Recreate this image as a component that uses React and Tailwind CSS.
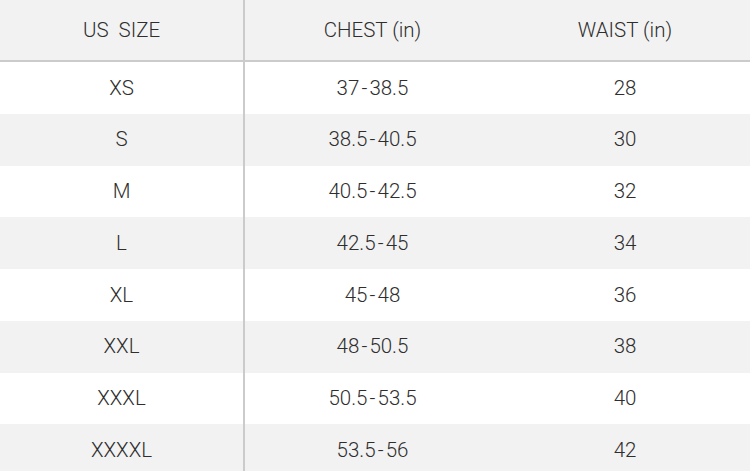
import React from "react";

const rows = [
  ["XS", "37-38.5", "28"],
  ["S", "38.5-40.5", "30"],
  ["M", "40.5-42.5", "32"],
  ["L", "42.5-45", "34"],
  ["XL", "45-48", "36"],
  ["XXL", "48-50.5", "38"],
  ["XXXL", "50.5-53.5", "40"],
  ["XXXXL", "53.5-56", "42"],
];

export default function App() {
  return (
    <div className="w-[750px] h-[471px] overflow-hidden bg-white text-[#2e2e2e] font-['Roboto',sans-serif] font-light text-[20.5px]">
      <div className="grid grid-cols-[245px_255px_250px] h-[62px] bg-[#f2f2f2] border-b-2 border-[#cbcbcb]">
        <div className="flex items-center justify-center border-r-2 border-[#cbcbcb] whitespace-pre">US  SIZE</div>
        <div className="flex items-center justify-center">CHEST (in)</div>
        <div className="flex items-center justify-center">WAIST (in)</div>
      </div>
      {rows.map((r, i) => (
        <div
          key={r[0]}
          className={`grid grid-cols-[245px_255px_250px] h-[51.75px] ${i % 2 ? "bg-[#f2f2f2]" : "bg-white"}`}
        >
          <div className="flex items-center justify-center border-r-2 border-[#cbcbcb]">{r[0]}</div>
          <div className="flex items-center justify-center">{r[1].replace(/-/g, "\u200A-\u200A")}</div>
          <div className="flex items-center justify-center">{r[2]}</div>
        </div>
      ))}
    </div>
  );
}
